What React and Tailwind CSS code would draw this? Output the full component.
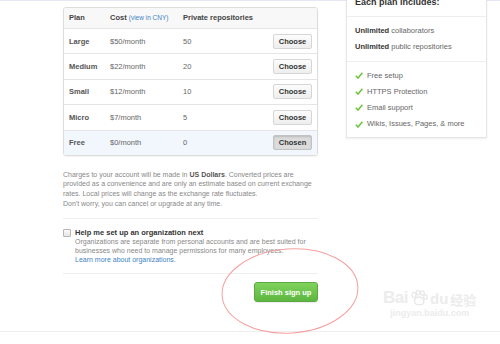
const plans = [
  { name: 'Large', cost: '$50/month', repos: '50' },
  { name: 'Medium', cost: '$22/month', repos: '20' },
  { name: 'Small', cost: '$12/month', repos: '10' },
  { name: 'Micro', cost: '$7/month', repos: '5' },
  { name: 'Free', cost: '$0/month', repos: '0', chosen: true },
];

const features = ['Free setup', 'HTTPS Protection', 'Email support', 'Wikis, Issues, Pages, & more'];

function Check() {
  return (
    <svg width="8" height="7" viewBox="0 0 8 7" className="shrink-0">
      <path d="M0.8 3.8 L3 6 L7.4 0.8" fill="none" stroke="#6cc644" strokeWidth="1.6" />
    </svg>
  );
}

function PlanTable() {
  return (
    <div className="border border-[#dddddd] rounded-[3px] shadow-[0_1px_2px_rgba(0,0,0,0.06)] overflow-hidden">
      <div className="flex items-center h-[20px] bg-[#f8f8f8] text-[7.5px] font-bold text-[#444]">
        <div className="w-[46px] pl-[5px]">Plan</div>
        <div className="w-[73px]">
          Cost <span className="font-normal text-[6.5px] text-[#4183c4]">(view in CNY)</span>
        </div>
        <div>Private repositories</div>
      </div>
      {plans.map(p => (
        <div
          key={p.name}
          className={`flex items-center h-[25.4px] border-t border-[#e5e5e5] text-[7.5px] ${p.chosen ? 'bg-[#f1f7fd]' : 'bg-white'}`}
        >
          <div className="w-[46px] pl-[5px] font-bold text-[#555]">{p.name}</div>
          <div className="w-[73px] text-[#666]">{p.cost}</div>
          <div className="flex-1 text-[#666]">{p.repos}</div>
          <button
            className={`mr-[5px] w-[39px] h-[15px] rounded-[2px] border text-[7.5px] font-bold text-[#333] ${p.chosen ? 'bg-[#dcdcdc] border-[#c2c2c2] shadow-[inset_0_1px_2px_rgba(0,0,0,0.15)]' : 'bg-gradient-to-b from-[#fcfcfc] to-[#eeeeee] border-[#d6d6d6]'}`}
          >
            {p.chosen ? 'Chosen' : 'Choose'}
          </button>
        </div>
      ))}
    </div>
  );
}

function Includes() {
  return (
    <div className="w-[141px] -mt-[10px] border border-[#e5e5e5] shadow-[0_1px_2px_rgba(0,0,0,0.07)] bg-white">
      <div className="h-[25px] flex items-end pb-[9px] pl-[8px] text-[9px] leading-none font-bold text-[#333] border-b border-[#eeeeee]">
        Each plan includes:
      </div>
      <div className="pl-[8px] pt-[6px] pb-[6px] border-b border-[#eeeeee] text-[7.5px] text-[#666] leading-[16px]">
        <div><span className="font-bold text-[#333]">Unlimited</span> collaborators</div>
        <div><span className="font-bold text-[#333]">Unlimited</span> public repositories</div>
      </div>
      <div className="pl-[8px] pt-[5px] pb-[5px] text-[7.5px] text-[#666]">
        {features.map(f => (
          <div key={f} className="flex items-center gap-[4px] h-[16.3px]">
            <Check />
            <span>{f}</span>
          </div>
        ))}
      </div>
    </div>
  );
}

export default function App() {
  return (
    <div className="relative w-[500px] h-[344px] overflow-hidden bg-white font-['Liberation_Sans',Arial,sans-serif]">
      <div className="flex h-px">
        <div className="w-[347px] bg-[#e3e8f4]" />
        <div className="w-[115px]" />
        <div className="flex-1 bg-[#e3e8f4]" />
      </div>

      <div className="flex items-start pl-[63px] gap-[28px]">
        <div className="w-[255px] pt-[6px]">
          <PlanTable />

          <div className="mt-[14px] text-[7px] leading-[9.5px] text-[#888] whitespace-nowrap">
            <p>
              Charges to your account will be made in <b className="text-[#555]">US Dollars</b>. Converted prices are
              <br />
              provided as a convenience and are only an estimate based on current exchange
              <br />
              rates. Local prices will change as the exchange rate fluctuates.
            </p>
            <p className="mt-[0.5px]">Don't worry, you can cancel or upgrade at any time.</p>
          </div>

          <div className="mt-[10px] border-t border-[#eeeeee]" />

          <div className="flex mt-[9px]">
            <div className="w-[8px] h-[8px] mt-[1px] border border-[#b5b5b5] rounded-[1px] bg-gradient-to-b from-[#fafafa] to-[#e6e6e6] shrink-0" />
            <div className="ml-[4px] leading-[9px] whitespace-nowrap">
              <div className="text-[7.5px] font-bold text-[#333]">Help me set up an organization next</div>
              <div className="text-[7px] text-[#888]">
                Organizations are separate from personal accounts and are best suited for
                <br />
                businesses who need to manage permissions for many employees.
              </div>
              <div className="text-[7px] text-[#4183c4]">Learn more about organizations.</div>
            </div>
          </div>

          <div className="mt-[9px] border-t border-[#eeeeee]" />

          <div className="flex justify-end mt-[8px]">
            <button className="w-[64px] h-[20px] rounded-[3px] border border-[#5ca941] bg-gradient-to-b from-[#80d35c] to-[#5db640] text-white text-[7.5px] font-bold shadow-[0_1px_1px_rgba(0,0,0,0.08)]">
              Finish sign up
            </button>
          </div>
        </div>

        <Includes />
      </div>

      <div className="absolute left-0 right-0 top-[331px] border-t border-[#eeeeee]" />

      {/* annotation ellipse */}
      <svg className="absolute left-0 top-0 pointer-events-none" width="500" height="344">
        <ellipse cx="290" cy="291" rx="68" ry="42" fill="none" stroke="#f5a0a0" strokeWidth="1" transform="rotate(-4 290 291)" />
      </svg>

      {/* watermark */}
      <div className="absolute left-[383px] top-[289px] flex flex-col items-center text-[#ececec] pointer-events-none">
        <div className="flex items-end gap-[2px]">
          <span className="text-[17px] font-bold leading-none tracking-[-0.5px]">Bai</span>
          <svg width="18" height="16" viewBox="0 0 18 16">
            <g fill="none" stroke="#e8e8e8" strokeWidth="1.3">
              <ellipse cx="4" cy="5" rx="2" ry="2.6" />
              <ellipse cx="8" cy="2.6" rx="1.8" ry="2.2" />
              <ellipse cx="12.5" cy="3" rx="1.8" ry="2.2" />
              <ellipse cx="15.5" cy="7" rx="1.8" ry="2.3" />
              <path d="M9 7 C 5 7, 3 12, 6 14 C 8 15, 11 15, 13 14 C 15 12, 13 7, 9 7 Z" />
            </g>
          </svg>
          <span className="text-[15px] font-bold leading-none">du</span>
          <span className="text-[13px] font-bold leading-none font-['Noto_Sans_CJK_SC',sans-serif]">经验</span>
        </div>
        <div className="text-[9px] font-bold leading-[11px] mt-[2px]">jingyan.baidu.com</div>
      </div>
    </div>
  );
}
